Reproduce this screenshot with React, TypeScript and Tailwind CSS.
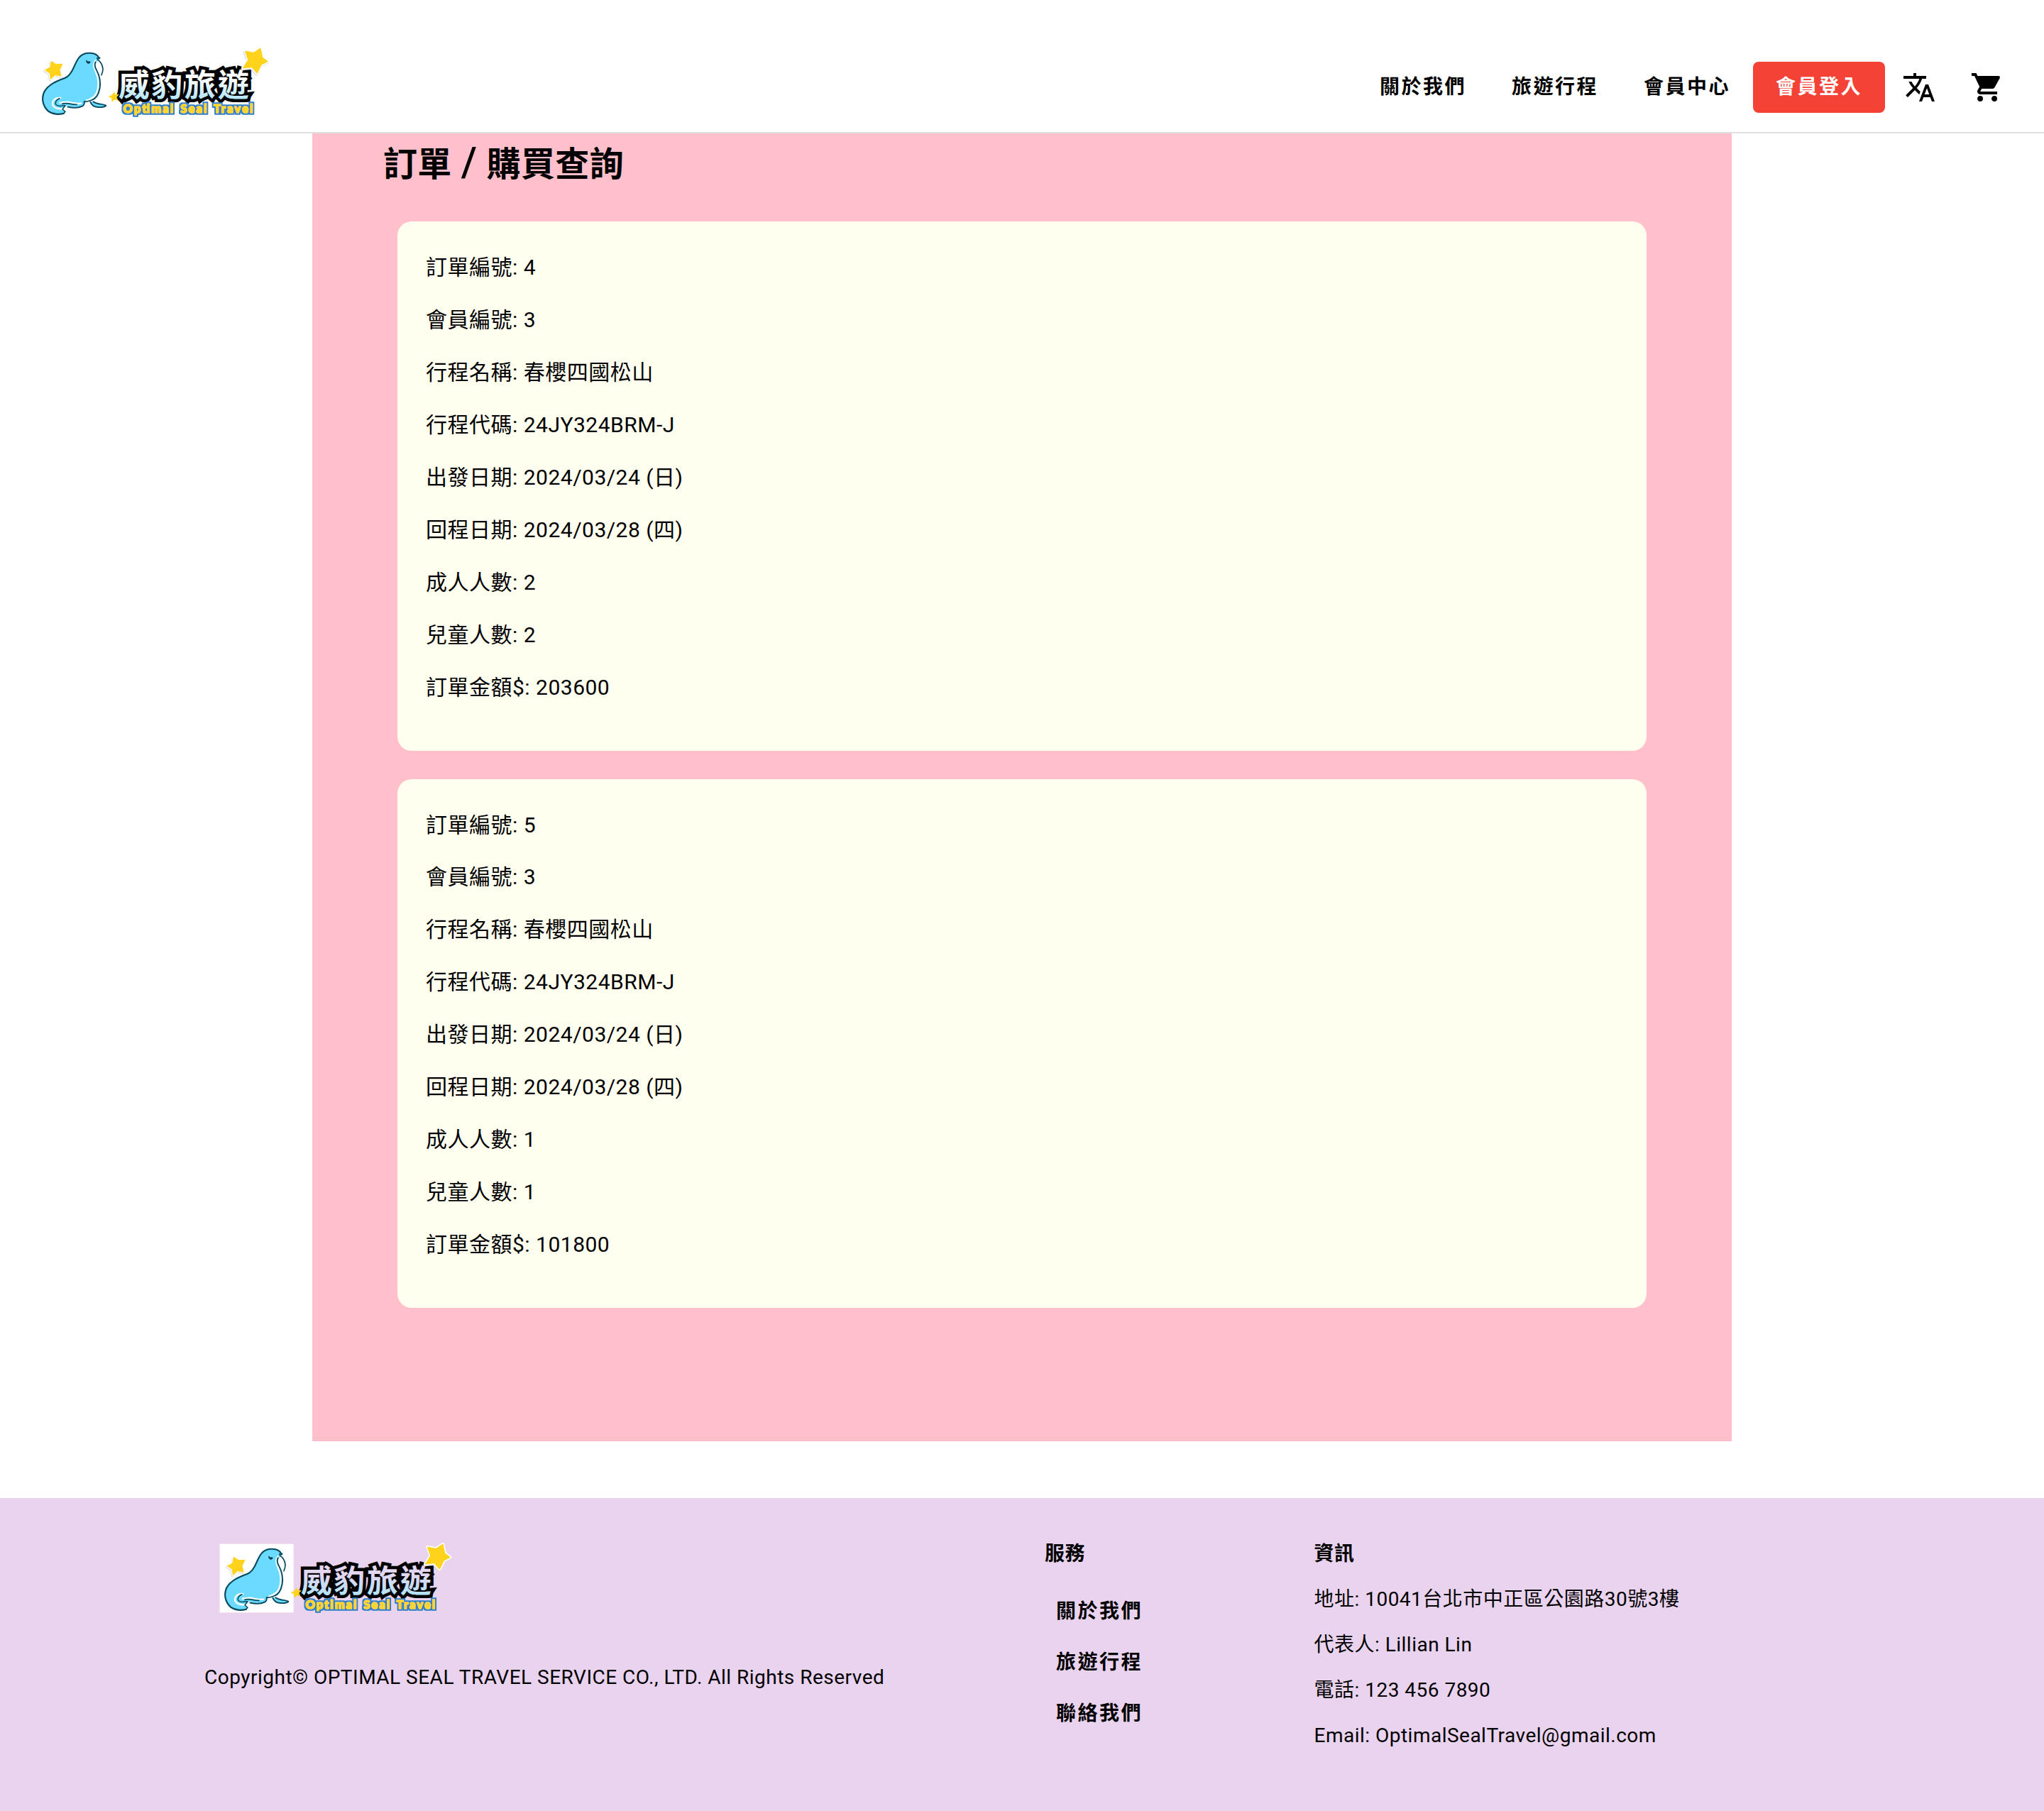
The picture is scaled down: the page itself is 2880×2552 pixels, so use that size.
const STAR_RIGHT = 'M981 54 L989 92 L1012 110 L985 123 L967 160 L944 134 L907 138 L929 103 L916 66 L952 73 Z';
const STAR_LEFT = 'M97 109 L117 122 L144 121 L132 145 L138 171 L113 167 L94 185 L91 160 L70 146 L92 135 Z';
const STAR_SMALL = 'M362 239 L367 250 L382 250 L373 260 L377 273 L363 270 L354 280 L352 265 L340 258 L355 252 Z';

function Logo({ id, top, className }: { id: string; top: string; className: string }) {
  return (
    <svg viewBox="0 0 1080 420" className={className} aria-label="威豹旅遊">
      <defs>
        <linearGradient id={id} gradientUnits="userSpaceOnUse" x1="0" y1="150" x2="0" y2="275">
          <stop offset="0.25" stopColor={top} />
          <stop offset="1" stopColor="#aee4fb" />
        </linearGradient>
        <filter id={`${id}-outline`} x="-5%" y="-40%" width="110%" height="180%">
          <feMorphology in="SourceAlpha" operator="dilate" radius="6" result="grown" />
          <feFlood floodColor="#2d7fc8" />
          <feComposite in2="grown" operator="in" result="outline" />
          <feMerge>
            <feMergeNode in="outline" />
            <feMergeNode in="SourceGraphic" />
          </feMerge>
        </filter>
      </defs>
      <rect x="38" y="53" width="312" height="290" fill="#fff" />
      <path
        d="M300 98 C292 78 272 73 246 75 C216 80 206 104 194 130 C184 154 174 172 154 180 C120 193 84 206 66 240 C54 270 62 300 84 320 C102 334 130 335 150 329 L156 322 L146 312 L160 296 C176 304 206 306 226 300 C236 294 238 288 238 280 C252 280 262 274 270 270 C290 262 302 236 303 206 C304 180 296 160 288 146 C280 130 284 112 300 98 Z"
        fill="#6bdaff"
      />
      <g fill="none" strokeLinecap="round" strokeLinejoin="round">
        <path
          d="M284 106 C274 118 276 136 284 152 C298 182 300 214 288 244 C280 262 262 270 246 275 M136 264 C104 262 92 290 112 304 C124 312 136 308 146 312 M134 284 C150 284 164 276 180 284 C196 289 210 288 222 287"
          stroke="#fff"
          strokeWidth="7"
        />
        <path
          d="M299 96 C292 78 272 72 246 75 C216 80 206 104 194 130 C184 154 174 172 154 180 C120 193 84 206 66 240 C54 270 62 300 84 320 C102 334 130 335 150 329"
          stroke="#07495b"
          strokeWidth="6.5"
        />
        <path d="M150 329 L156 322 L144 312 L156 296 L138 298 C118 300 112 290 116 280 C120 270 126 268 132 266" stroke="#07495b" strokeWidth="4.5" />
        <path d="M284 112 C278 122 282 136 288 146 C300 168 306 196 302 222 C297 250 284 268 268 273 C256 278 246 280 238 280" stroke="#07495b" strokeWidth="5.5" />
        <path d="M144 289 C164 281 182 294 204 292 M166 302 C190 307 216 305 228 299 C236 294 238 288 236 279" stroke="#07495b" strokeWidth="5.5" />
        <path d="M262 281 C266 292 278 302 294 303 C308 304 322 302 328 297 C318 288 292 294 274 280" stroke="#07495b" strokeWidth="5.5" fill="#6bdaff" />
        <path d="M292 103 C304 108 314 124 315 142 C315 152 312 160 309 167" stroke="#07495b" strokeWidth="5" />
        <path d="M290 96 C296 100 300 100 302 94" stroke="#07495b" strokeWidth="5" />
        <path d="M246 107 C247 117 256 120 260 112" stroke="#07364a" strokeWidth="5" />
        <path d="M251 113 L257 113" stroke="#07364a" strokeWidth="7" />
      </g>
      <g strokeLinejoin="round">
        <path d={STAR_LEFT} transform="translate(-2 3)" fill="#dadada" stroke="#dadada" strokeWidth="11" />
        <path d={STAR_LEFT} fill="#fff" stroke="#fff" strokeWidth="11" />
        <path d={STAR_LEFT} fill="#ffd21c" stroke="#ffd21c" strokeWidth="3" />
      </g>
      <text
        x="380"
        y="257"
        fontFamily='"Noto Sans CJK TC", sans-serif'
        fontWeight="700"
        fontSize="132"
        letterSpacing="8"
        fill={`url(#${id})`}
        stroke="#000"
        strokeWidth="27"
        strokeLinejoin="miter"
        strokeMiterlimit="3"
        paintOrder="stroke"
      >
        威豹旅遊
      </text>
      <g strokeLinejoin="round">
        <path d={STAR_SMALL} fill="#ffd21c" stroke="#ffd21c" strokeWidth="2" />
        <path d={STAR_RIGHT} transform="translate(-2 3)" fill="#d4d4d4" stroke="#d4d4d4" strokeWidth="13" />
        <path d={STAR_RIGHT} fill="#fff" stroke="#fff" strokeWidth="13" />
        <path d={STAR_RIGHT} fill="#ffd21c" stroke="#ffd21c" strokeWidth="3" />
      </g>
      <text
        x="401"
        y="328"
        textLength="548"
        lengthAdjust="spacing"
        fontFamily="Lato, sans-serif"
        fontWeight="900"
        fontSize="49"
        wordSpacing="6"
        fill="#ffd52e"
        stroke="#ffd52e"
        strokeWidth="5"
        strokeLinejoin="round"
        filter={`url(#${id}-outline)`}
      >
        Optimal Seal Travel
      </text>
    </svg>
  );
}

const navItems = ['關於我們', '旅遊行程', '會員中心'];
const serviceItems = ['關於我們', '旅遊行程', '聯絡我們'];
const infoItems = [
  '地址: 10041台北市中正區公園路30號3樓',
  '代表人: Lillian Lin',
  '電話: 123 456 7890',
  'Email: OptimalSealTravel@gmail.com',
];

const orders = [
  { id: 4, member: 3, adults: 2, children: 2, total: 203600 },
  { id: 5, member: 3, adults: 1, children: 1, total: 101800 },
];

function OrderCard({ order }: { order: (typeof orders)[number] }) {
  const rows = [
    `訂單編號: ${order.id}`,
    `會員編號: ${order.member}`,
    '行程名稱: 春櫻四國松山',
    '行程代碼: 24JY324BRM-J',
    '出發日期: 2024/03/24 (日)',
    '回程日期: 2024/03/28 (四)',
    `成人人數: ${order.adults}`,
    `兒童人數: ${order.children}`,
    `訂單金額$: ${order.total}`,
  ];
  return (
    <section className="h-[745.5px] rounded-[20px] bg-[#fffff0] px-10 pt-[43px] text-[30px] tracking-[0.5px]">
      {rows.map((row) => (
        <p key={row} className="mb-[30px] h-[43.94px] leading-[44px]">
          {row}
        </p>
      ))}
    </section>
  );
}

export default function App() {
  return (
    <div className="flex h-[2552px] w-[2880px] flex-col bg-white font-[Roboto,'Noto_Sans_CJK_TC',sans-serif] text-black">
      <header className="flex h-[188px] shrink-0 items-start justify-between border-b-2 border-[#e0e0e0] pr-8 pl-10">
        <Logo id="logo-top" top="#ffffff" className="mt-[50px] h-[140px] w-[360px] shrink-0" />
        <nav className="mt-[87px] flex h-[72px] items-center text-[28px] font-bold tracking-[2.5px]">
          {navItems.map((item) => (
            <a key={item} className="w-[186px] pl-8 leading-[72px] whitespace-nowrap">
              {item}
            </a>
          ))}
          <a className="w-[186px] rounded-lg bg-[#f44336] pl-8 leading-[72px] whitespace-nowrap text-white">會員登入</a>
          <button className="flex w-24 justify-center" aria-label="語言">
            <svg viewBox="0 0 24 24" className="size-12" fill="currentColor">
              <path d="M12.87,15.07L10.33,12.56L10.36,12.53C12.1,10.59 13.34,8.36 14.07,6H17V4H10V2H8V4H1V6H12.17C11.5,7.92 10.44,9.75 9,11.35C8.07,10.32 7.3,9.19 6.69,8H4.69C5.42,9.63 6.42,11.17 7.67,12.56L2.58,17.58L4,19L9,14L12.11,17.11L12.87,15.07M18.5,10H16.5L12,22H14L15.12,19H19.87L21,22H23L18.5,10M15.88,17L17.5,12.67L19.12,17H15.88Z" />
            </svg>
          </button>
          <button className="flex w-24 justify-center" aria-label="購物車">
            <svg viewBox="0 0 24 24" className="size-12" fill="currentColor">
              <path d="M17,18A2,2 0 0,1 19,20A2,2 0 0,1 17,22C15.89,22 15,21.1 15,20C15,18.89 15.89,18 17,18M1,2H4.27L5.21,4H20A1,1 0 0,1 21,5C21,5.17 20.95,5.34 20.88,5.5L17.3,11.97C16.96,12.58 16.3,13 15.55,13H8.1L7.2,14.63L7.17,14.75A0.25,0.25 0 0,0 7.42,15H19V17H7C5.89,17 5,16.1 5,15C5,14.65 5.09,14.32 5.24,14.04L6.6,11.59L3,4H1V2M7,18A2,2 0 0,1 9,20A2,2 0 0,1 7,22C5.89,22 5,21.1 5,20C5,18.89 5.89,18 7,18Z" />
            </svg>
          </button>
        </nav>
      </header>

      <main className="mx-auto h-[1843px] w-[2000px] shrink-0 bg-[#ffc0cb] px-[120px]">
        <h1 className="-ml-5 flex h-[124px] items-baseline pt-2 text-[48px] leading-[72px] font-bold tracking-[0.3px]">
          <span>訂單</span>
          <span className="w-[49px] text-center text-[57px] leading-none font-medium"> / </span>
          <span>購買查詢</span>
        </h1>
        <div className="flex flex-col gap-10">
          {orders.map((order) => (
            <OrderCard key={order.id} order={order} />
          ))}
        </div>
      </main>

      <footer className="mt-20 flex h-[441px] shrink-0 bg-[#e9d3ee] pl-[288px] text-[28px] tracking-[0.49px]">
        <div className="w-[1184px]">
          <Logo id="logo-bottom" top="#e3d6f0" className="mt-[47px] ml-[8.5px] h-[140px] w-[360px]" />
          <p className="mt-[46px] leading-10 whitespace-nowrap">
            Copyright© OPTIMAL SEAL TRAVEL SERVICE CO., LTD. All Rights Reserved
          </p>
        </div>
        <div className="w-[379.5px] pt-[59px]">
          <h2 className="leading-10 font-bold">服務</h2>
          <ul className="mt-[25px] pl-4 font-bold tracking-[2.5px]">
            {serviceItems.map((item) => (
              <li key={item} className="leading-[72px]">
                {item}
              </li>
            ))}
          </ul>
        </div>
        <div className="pt-[59px]">
          <h2 className="leading-10 font-bold">資訊</h2>
          {infoItems.map((item) => (
            <p key={item} className="mt-6 leading-10 whitespace-nowrap">
              {item}
            </p>
          ))}
        </div>
      </footer>
    </div>
  );
}
